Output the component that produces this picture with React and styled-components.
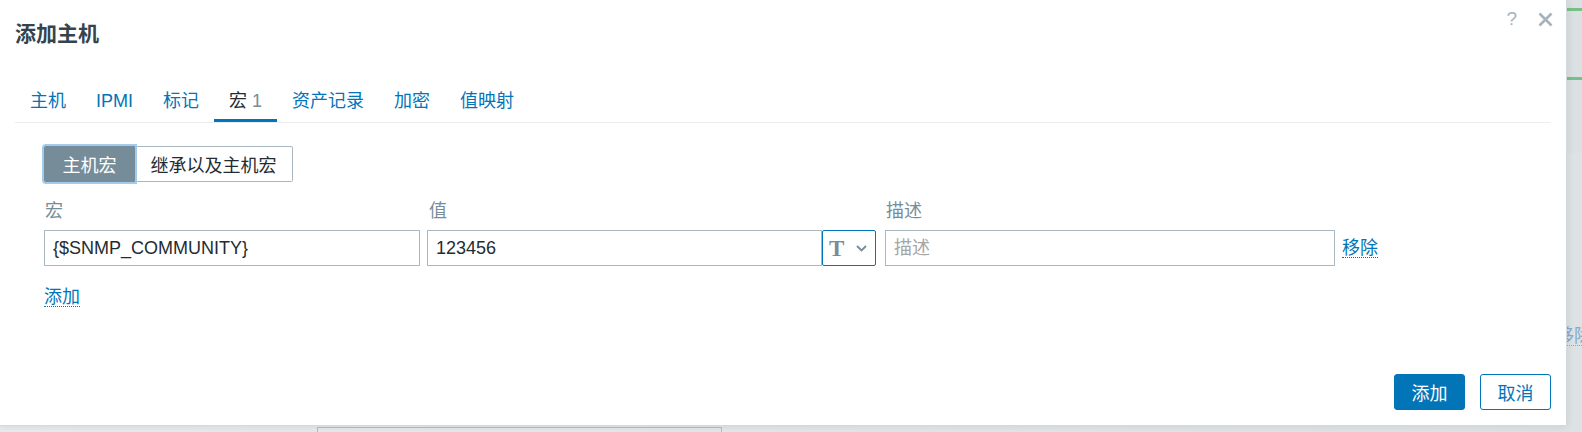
import React from 'react';
import styled, { createGlobalStyle } from 'styled-components';

const GlobalStyle = createGlobalStyle`
  html, body {
    margin: 0;
    padding: 0;
  }
  body {
    font-family: "Liberation Sans", Arial, "Noto Sans CJK SC", sans-serif;
    background: #e4e8eb;
  }
`;

const Backdrop = styled.div`
  position: relative;
  width: 1582px;
  height: 432px;
  overflow: hidden;
  background: linear-gradient(90deg, #e8ebed 0%, #dde2e5 100%);
`;

// bits of the page that show behind the overlay
const PageHeader = styled.div`
  position: absolute;
  top: 0;
  right: 0;
  width: 100%;
  height: 153px;
  background: linear-gradient(90deg, #e3e7ea, #dbe0e3);
`;

const GreenRule = styled.div`
  position: absolute;
  right: 0;
  top: ${(p) => p.$top}px;
  width: 100%;
  height: 3px;
  background: #76c185;
`;

const GhostLink = styled.span`
  position: absolute;
  left: 1556px;
  top: 327px;
  font-size: 18px;
  line-height: 18px;
  white-space: nowrap;
  color: #86aacb;
  border-bottom: 1px dotted #86aacb;
`;

const GhostBox = styled.div`
  position: absolute;
  left: 317px;
  top: 427px;
  width: 405px;
  height: 20px;
  border: 1px solid #b5bec4;
  box-sizing: border-box;
`;

const Dialog = styled.div`
  position: relative;
  z-index: 1;
  width: 1567px;
  height: 426px;
  box-sizing: border-box;
  padding: 0 15px 15px;
  background: #fff;
  border-right: 1px solid #d3d9dd;
  border-bottom: 1px solid #d3d9dd;
  box-shadow: 0 0 8px rgba(0, 0, 0, 0.1);
  display: flex;
  flex-direction: column;
`;

const Header = styled.div`
  height: 64px;
  display: flex;
  align-items: center;
`;

const Title = styled.h4`
  margin: 0;
  font-size: 21px;
  font-weight: bold;
  color: #34434c;
`;

const HeaderTools = styled.div`
  margin-left: auto;
  margin-right: -2px;
  align-self: flex-start;
  padding-top: 10px;
  display: flex;
  align-items: center;
  gap: 21px;
  color: #a6b3bd;
`;

const HelpMark = styled.span`
  font-size: 19px;
  line-height: 18px;
`;

const TabList = styled.div`
  margin-top: 16px;
  display: flex;
  border-bottom: 1px solid #ebeef0;
`;

const Tab = styled.div`
  padding: 3px 15px 0;
  height: 42px;
  box-sizing: border-box;
  line-height: 36px;
  font-size: 18px;
  color: ${(p) => (p.$active ? '#1f2c33' : '#0275b8')};
  border-bottom: 3px solid ${(p) => (p.$active ? '#0275b8' : 'transparent')};
  white-space: nowrap;
`;

const Count = styled.span`
  color: #768d99;
  margin-left: 5px;
`;

const Panel = styled.div`
  padding: 23px 29px 0;
  display: flex;
  flex-direction: column;
  align-items: flex-start;
`;

const Segmented = styled.div`
  display: flex;
  height: 36px;
`;

const SegButton = styled.div`
  position: relative;
  z-index: ${(p) => (p.$active ? 1 : 0)};
  width: ${(p) => p.$w}px;
  height: 36px;
  box-sizing: border-box;
  display: flex;
  align-items: center;
  justify-content: center;
  font-size: 18px;
  background: ${(p) => (p.$active ? '#768d99' : '#fff')};
  color: ${(p) => (p.$active ? '#fff' : '#1f2c33')};
  border: 1px solid ${(p) => (p.$active ? '#768d99' : '#a9b7c0')};
  border-left-width: ${(p) => (p.$active ? 1 : 0)}px;
  border-radius: ${(p) => (p.$active ? '2px 0 0 2px' : '0 2px 2px 0')};
  box-shadow: ${(p) => (p.$active ? '0 0 0 2px #a4cbec' : 'none')};
`;

const MacroGrid = styled.div`
  margin-top: 17px;
  display: grid;
  grid-template-columns: 376px 449px 452px auto;
  column-gap: 7px;
  row-gap: 7px;
  align-items: center;
`;

const Label = styled.div`
  font-size: 18px;
  line-height: 24px;
  color: #768d99;
  padding-left: ${(p) => p.$pad || 0}px;
`;

const Cell = styled.div`
  display: flex;
  padding-left: ${(p) => p.$pad || 0}px;
`;

const TextInput = styled.input`
  flex: 1;
  min-width: 0;
  height: 36px;
  box-sizing: border-box;
  padding: 0 8px;
  border: 1px solid #a9b7c0;
  border-radius: 0;
  font-family: inherit;
  font-size: 18px;
  color: #1f2c33;
  background: #fff;
  outline: none;

  &::placeholder {
    color: #a5a5a5;
  }
`;

const TypeButton = styled.div`
  width: 54px;
  height: 36px;
  box-sizing: border-box;
  border: 1px solid #0275b8;
  border-radius: 2px;
  display: flex;
  align-items: center;
  padding-left: 6px;
  gap: 12px;
  background: #fff;
`;

const TypeGlyph = styled.span`
  font-family: "Liberation Serif", "Times New Roman", serif;
  font-weight: bold;
  font-size: 23px;
  line-height: 23px;
  color: #768d99;
`;

const DottedLink = styled.span`
  font-size: 18px;
  line-height: 18px;
  color: #0275b8;
  border-bottom: 1px dotted #0275b8;
  white-space: nowrap;
`;

const AddRow = styled.div`
  margin-top: 22px;
  display: flex;
`;

const Footer = styled.div`
  margin-top: auto;
  display: flex;
  justify-content: flex-end;
  gap: 15px;
`;

const FooterButton = styled.button`
  width: 71px;
  height: 36px;
  box-sizing: border-box;
  border-radius: 3px;
  font-family: inherit;
  font-size: 18px;
  border: 1px solid #0275b8;
  background: ${(p) => (p.$primary ? '#0275b8' : '#fff')};
  color: ${(p) => (p.$primary ? '#fff' : '#0275b8')};
  padding: 0;
`;

const CloseIcon = () => (
  <svg width="15" height="15" viewBox="0 0 15 15">
    <path d="M1.5 1.5 L13.5 13.5 M13.5 1.5 L1.5 13.5" stroke="#a6b3bd" strokeWidth="2.6" />
  </svg>
);

const Chevron = () => (
  <svg width="11" height="7" viewBox="0 0 11 7">
    <path d="M1 1 L5.5 5.5 L10 1" fill="none" stroke="#768d99" strokeWidth="1.8" />
  </svg>
);

const tabs = ['主机', 'IPMI', '标记', '宏', '资产记录', '加密', '值映射'];

export default function App() {
  return (
    <>
      <GlobalStyle />
      <Backdrop>
        <PageHeader />
        <GreenRule $top={8} />
        <GreenRule $top={77} />
        <GhostLink>移除</GhostLink>
        <GhostBox />

        <Dialog>
          <Header>
            <Title>添加主机</Title>
            <HeaderTools>
              <HelpMark>?</HelpMark>
              <CloseIcon />
            </HeaderTools>
          </Header>

          <TabList>
            {tabs.map((t) => (
              <Tab key={t} $active={t === '宏'}>
                {t}
                {t === '宏' && <Count>1</Count>}
              </Tab>
            ))}
          </TabList>

          <Panel>
            <Segmented>
              <SegButton $active $w={91}>主机宏</SegButton>
              <SegButton $w={158}>继承以及主机宏</SegButton>
            </Segmented>

            <MacroGrid>
              <Label $pad={1}>宏</Label>
              <Label $pad={2}>值</Label>
              <Label $pad={3}>描述</Label>
              <div />

              <Cell>
                <TextInput defaultValue="{$SNMP_COMMUNITY}" />
              </Cell>
              <Cell>
                <TextInput defaultValue="123456" />
                <TypeButton>
                  <TypeGlyph>T</TypeGlyph>
                  <Chevron />
                </TypeButton>
              </Cell>
              <Cell $pad={2}>
                <TextInput placeholder="描述" />
              </Cell>
              <Cell>
                <DottedLink>移除</DottedLink>
              </Cell>
            </MacroGrid>

            <AddRow>
              <DottedLink>添加</DottedLink>
            </AddRow>
          </Panel>

          <Footer>
            <FooterButton $primary>添加</FooterButton>
            <FooterButton>取消</FooterButton>
          </Footer>
        </Dialog>
      </Backdrop>
    </>
  );
}
